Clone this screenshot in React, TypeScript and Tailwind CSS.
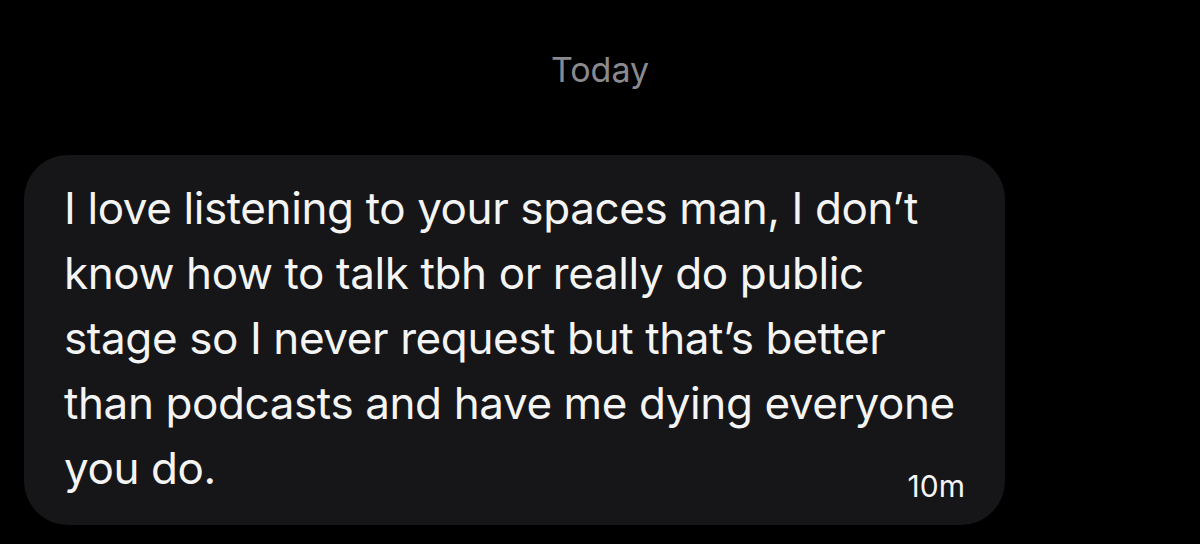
export default function App() {
  return (
    <div
      className="h-[544px] w-[1200px] overflow-hidden bg-black"
      style={{ fontFamily: 'Inter, "Noto Sans", sans-serif' }}
    >
      <div className="pt-[50px] text-center text-[34px] leading-[40px] text-[#8a8a8e]">Today</div>

      <div className="ml-[24px] mt-[65px] w-[981px] rounded-[44px] bg-[#161618] pb-[24px] pl-[40px] pr-[40px] pt-[21px] flow-root">
        <p className="text-[44px] leading-[65px] tracking-[-0.4px] text-[#f4f4f4]">
          I love listening to your spaces man, I don’t know how to talk tbh or really do public stage so I never
          request but that’s better than podcasts and have me dying everyone you do.
          <span className="float-right mt-[35px] text-[30px] leading-[30px] tracking-normal">10m</span>
        </p>
      </div>
    </div>
  );
}
